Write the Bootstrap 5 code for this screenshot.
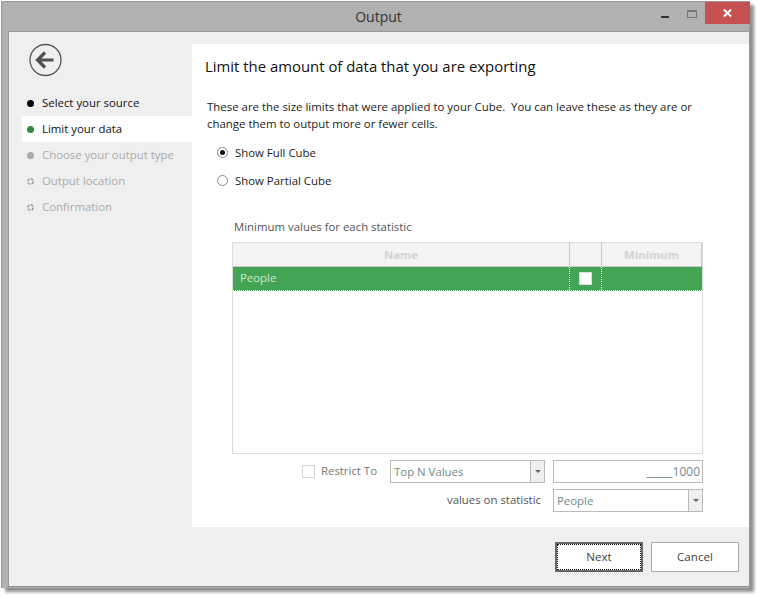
<!DOCTYPE html>
<html lang="en">
<head>
<meta charset="utf-8">
<title>Output</title>
<link rel="stylesheet" href="https://cdn.jsdelivr.net/npm/bootstrap@5.3.0/dist/css/bootstrap.min.css">
<style>
html,body{height:100%;}
body{background:#fff;font-family:"Open Sans","Noto Sans",sans-serif;font-size:11.4px;color:#333;padding:1px 0 0 1px;overflow:hidden;}
.win{width:749px;height:587px;background:#b1b1b1;border:1px solid #999;border-bottom:0;box-shadow:4px 4px 3px #8f8f8f;display:flex;flex-direction:column;padding-left:6px;}
.titlebar{height:29px;flex:none;position:relative;font-size:14px;color:#333;}
.titlebar .ttl{line-height:30px;text-align:center;}
.wctl{position:absolute;top:0;right:-1px;height:22px;display:flex;align-items:flex-start;}
.wmin{width:8px;height:2px;background:#333;margin:14px 18px 0 0;}
.wmax{width:10px;height:8px;border:1px solid #777;border-top-width:2px;margin:8px 8px 0 0;}
.wclose{width:45px;height:22px;background:#c75050;color:#fff;display:flex;align-items:center;justify-content:center;}
.inner{flex:1;min-height:0;background:#efefef;border-top:1px solid #999;border-left:1px solid #999;display:flex;flex-direction:column;margin-bottom:1px;border-bottom:1px solid #8c8c8c;}
.mainrow{height:483px;margin-top:12px;flex:none;display:flex;}
.side{width:183px;flex:none;padding-left:13px;margin-top:-12px;}
.backbtn{margin:4px 0 0 7px;height:48px;display:block;}
.stepper{margin-top:6px;}
.stp{height:26px;display:flex;align-items:center;padding-left:5px;color:#aaa;}
.stp.done{color:#111;}
.stp.cur{color:#111;background:#fff;}
.dt{width:7px;height:7px;border-radius:50%;margin-right:8px;flex:none;}
.dt-k{background:#000;}
.dt-g{background:#2e8b3a;}
.dt-f{background:#aaa;}
.dotring{width:7px;height:7px;margin-right:8px;flex:none;display:block;}
.pane{flex:1;background:#fff;padding:12px 0 0 13px;}
.pane h1{font-size:14.9px;font-weight:400;color:#111;margin:0;line-height:20px;}
.intro{margin:22px 0 0 2px;line-height:17px;width:500px;color:#222;font-size:11.43px;}
.opt{display:flex;align-items:center;height:14px;margin:0 0 14px 26px;gap:7px;color:#222;}
.opt .otx{position:relative;top:1px;}
.optlist{margin-top:13px;margin-left:-14px;}
.rd{width:11px;height:11px;border:1px solid #888;border-radius:50%;background:#fff;flex:none;position:relative;}
.rd.on::after{content:"";position:absolute;left:2px;top:2px;width:5px;height:5px;border-radius:50%;background:#111;}
.cap{margin:32px 0 0 29px;line-height:16px;color:#555;}
.grid{margin:7px 0 0 27px;width:471px;height:212px;border:1px solid #dcdcdc;display:flex;flex-direction:column;}
.ghead{height:24px;flex:none;display:flex;background:#f4f4f4;border-bottom:1px solid #c8c8c8;font-weight:700;color:#d3d3d3;font-size:11.4px;}
.ghead>div{display:flex;align-items:center;justify-content:center;border-right:1px solid #c8c8c8;}
.c1{width:337px;}.c2{width:32px;}.c3{flex:1;}
.grow{height:24px;flex:none;display:flex;background:#43a553;color:#cfe6d3;border-bottom:1px dotted #fff;}
.grow>div{display:flex;align-items:center;}
.grow .c1{padding:0 0 2px 7px;border-right:1px dotted #fff;}
.grow .c2{justify-content:center;border-right:1px dotted #fff;}
.cbw{width:13px;height:13px;background:#fff;border:1px solid #ddd;}
.frm{margin:5px 0 0 0;width:498px;}
.frow{display:flex;justify-content:flex-end;height:24px;align-items:center;}
.frow+.frow{margin-top:5px;}
.cbx{width:13px;height:13px;border:1px solid #d4d4d4;background:#fff;margin-right:6px;}
.lbl{color:#777;}
.lbl2{color:#555;margin-right:12px;}
.combo{height:23px;border:1px solid #b9b9b9;display:flex;background:#fff;color:#6f8a8a;}
.combo .val{flex:1;padding-left:3px;line-height:22px;}
.combo .arr{width:14px;background:#efefef;border-left:1px solid #b9b9b9;display:flex;align-items:center;justify-content:center;}
.arr::after{content:"";border:3px solid transparent;border-top:3px solid #666;border-bottom:0;}
.w156{width:155px;margin:0 8px 0 13px;}
.w150{width:150px;}
.numbox{width:150px;height:23px;border:1px solid #b9b9b9;background:#fff;text-align:right;line-height:21px;padding-right:2px;color:#6f8a8a;font-size:12px;}
.foot{flex:1;display:flex;justify-content:flex-end;align-items:flex-start;gap:8px;padding:15px 10px 0 0;}
.btn.winbtn{width:88px;height:30px;padding:0;border-radius:0;background:#fff;border:1px solid #acacac;font-size:11.6px;color:#444;line-height:28px;}
.btn.winbtn.prim{border:1px solid #666;outline:1px dotted #111;outline-offset:-3px;box-shadow:inset 0 0 0 1px #666;}
</style>
</head>
<body>
<div class="win">
  <div class="titlebar">
    <div class="ttl">Output</div>
    <div class="wctl">
      <div class="wmin"></div><div class="wmax"></div>
      <div class="wclose"><svg width="9" height="8" viewBox="0 0 9 8"><path d="M1 0.5 8 7.5M8 0.5 1 7.5" stroke="#fff" stroke-width="2" fill="none"/></svg></div>
    </div>
  </div>
  <div class="inner">
    <div class="mainrow">
      <div class="side">
        <svg class="backbtn" width="33" height="33" viewBox="0 0 33 33"><circle cx="16.5" cy="16.5" r="15.5" fill="none" stroke="#555" stroke-width="1.3"/><path d="M8.5 16.5H24.5M16 9 8.5 16.5 16 24" fill="none" stroke="#505050" stroke-width="3.2"/></svg>
        <div class="stepper">
          <div class="stp done"><span class="dt dt-k"></span>Select your source</div>
          <div class="stp cur"><span class="dt dt-g"></span>Limit your data</div>
          <div class="stp"><span class="dt dt-f"></span>Choose your output type</div>
          <div class="stp"><svg class="dotring" viewBox="0 0 7 7"><circle cx="3.5" cy="3.5" r="2.7" fill="none" stroke="#999" stroke-width="1.5" stroke-dasharray="3 1.2"/></svg>Output location</div>
          <div class="stp"><svg class="dotring" viewBox="0 0 7 7"><circle cx="3.5" cy="3.5" r="2.7" fill="none" stroke="#999" stroke-width="1.5" stroke-dasharray="3 1.2"/></svg>Confirmation</div>
        </div>
      </div>
      <div class="pane">
        <h1>Limit the amount of data that you are exporting</h1>
        <p class="intro">These are the size limits that were applied to your Cube.&nbsp; You can leave these as they are or change them to output more or fewer cells.</p>
        <div class="optlist">
          <div class="opt"><span class="rd on"></span><span class="otx">Show Full Cube</span></div>
          <div class="opt"><span class="rd"></span><span class="otx">Show Partial Cube</span></div>
        </div>
        <div class="cap">Minimum values for each statistic</div>
        <div class="grid">
          <div class="ghead"><div class="c1">Name</div><div class="c2"></div><div class="c3">Minimum</div></div>
          <div class="grow"><div class="c1">People</div><div class="c2"><span class="cbw"></span></div><div class="c3"></div></div>
        </div>
        <div class="frm">
          <div class="frow"><span class="cbx"></span><span class="lbl">Restrict To</span>
            <div class="combo w156"><div class="val">Top N Values</div><div class="arr"></div></div>
            <div class="numbox">_____1000</div></div>
          <div class="frow"><span class="lbl2">values on statistic</span>
            <div class="combo w150"><div class="val">People</div><div class="arr"></div></div></div>
        </div>
      </div>
    </div>
    <div class="foot">
      <button type="button" class="btn winbtn prim">Next</button>
      <button type="button" class="btn winbtn">Cancel</button>
    </div>
  </div>
</div>
<script src="https://cdn.jsdelivr.net/npm/bootstrap@5.3.0/dist/js/bootstrap.bundle.min.js"></script>
</body>
</html>
